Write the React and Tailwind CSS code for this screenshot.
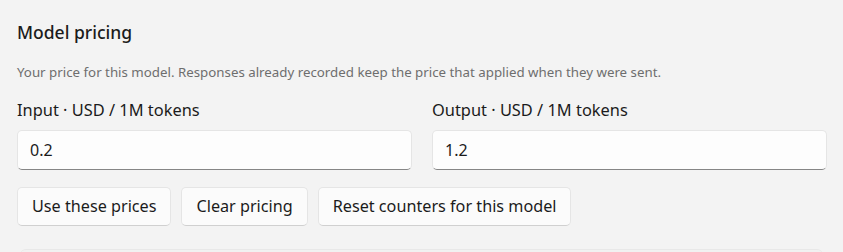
export default function App() {
  return (
    <div className="h-[252px] w-full overflow-hidden bg-[#f3f3f3] text-[#1b1b1b]" style={{ fontFamily: '"Noto Sans", "Open Sans", sans-serif' }}>
      <div className="pl-[17px] pr-[16px] pt-[20px]">
        <h2 className="text-[17.5px] font-medium leading-[24px]">Model pricing</h2>
        <p className="mt-[20px] text-[13.3px] leading-[16px] text-[#6e6e6e]">
          Your price for this model. Responses already recorded keep the price that applied when they were sent.
        </p>
        <div className="mt-[20px] grid grid-cols-2 gap-[20px]">
          <label className="flex min-w-0 flex-col">
            <span className="text-[16.4px] leading-[20px]">Input · USD / 1M tokens</span>
            <input
              defaultValue="0.2"
              className="mt-[10px] h-[40px] w-full min-w-0 rounded-[5px] border border-[#e5e5e5] border-b-[#868686] bg-[#fdfdfd] px-[12px] text-[16px] outline-none"
            />
          </label>
          <label className="flex min-w-0 flex-col">
            <span className="text-[16.4px] leading-[20px]">Output · USD / 1M tokens</span>
            <input
              defaultValue="1.2"
              className="mt-[10px] h-[40px] w-full min-w-0 rounded-[5px] border border-[#e5e5e5] border-b-[#868686] bg-[#fdfdfd] px-[12px] text-[16px] outline-none"
            />
          </label>
        </div>
        <div className="mt-[17px] flex gap-[10px]">
          <button className="h-[39px] rounded-[5px] border border-[#e5e5e5] border-b-[#d0d0d0] bg-[#fbfbfb] px-[14px] text-[16.2px]">Use these prices</button>
          <button className="h-[39px] rounded-[5px] border border-[#e5e5e5] border-b-[#d0d0d0] bg-[#fbfbfb] px-[14px] text-[16.2px]">Clear pricing</button>
          <button className="h-[39px] rounded-[5px] border border-[#e5e5e5] border-b-[#d0d0d0] bg-[#fbfbfb] px-[14px] text-[16.2px]">Reset counters for this model</button>
        </div>
      </div>
      <div className="mx-[20px] mt-[23px] h-[40px] rounded-t-[6px] border-t border-[#e8e8e8] bg-[#f1f1f1]" />
    </div>
  );
}
